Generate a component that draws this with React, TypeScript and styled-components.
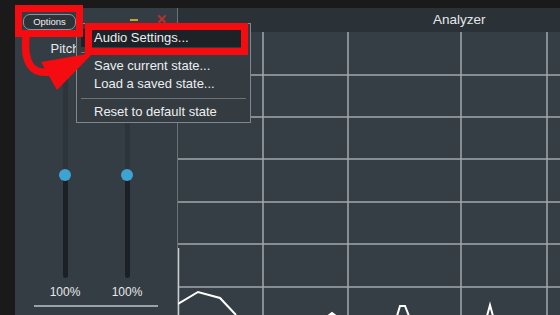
import React from 'react';
import styled, { createGlobalStyle } from 'styled-components';

const GlobalStyle = createGlobalStyle`
  html, body {
    margin: 0;
    padding: 0;
    background: #1a1a1a;
    overflow: hidden;
  }
  * {
    box-sizing: border-box;
  }
`;

const font = `'Liberation Sans', Arial, sans-serif`;

const Screen = styled.div`
  position: relative;
  width: 560px;
  height: 315px;
  padding: 8px 0 0 15px;
  display: flex;
  background: #1a1a1a;
  font-family: ${font};
  overflow: hidden;
`;

const LeftPanel = styled.div`
  width: 163px;
  display: flex;
  flex-direction: column;
  background: #353d44;
  border-right: 1px solid #6b7277;
`;

const TopBar = styled.div`
  height: 28px;
  padding: 6px 0 0 8px;
  display: flex;
  align-items: flex-start;
`;

const OptionsButton = styled.div`
  width: 53px;
  height: 16px;
  border: 1px solid #8b949a;
  border-radius: 7px;
  background: #2c3439;
  color: #eef0f1;
  font-size: 9.5px;
  line-height: 14px;
  text-align: center;
`;

const Minimize = styled.div`
  width: 8px;
  height: 2px;
  margin: 5px 0 0 54px;
  background: #c9a227;
`;

const Close = styled.div`
  position: relative;
  width: 8px;
  height: 8px;
  margin: 1px 0 0 20px;

  &::before,
  &::after {
    content: '';
    position: absolute;
    left: -1px;
    top: 3px;
    width: 10px;
    height: 1.5px;
    background: #b8322e;
    transform: rotate(45deg);
  }
  &::after {
    transform: rotate(-45deg);
  }
`;

const SliderRow = styled.div`
  margin-top: 5px;
  display: flex;
  justify-content: center;
  gap: 22px;
`;

const SliderColumn = styled.div`
  width: 40px;
  display: flex;
  flex-direction: column;
  align-items: center;
`;

const SliderLabel = styled.div`
  height: 16px;
  color: #e6e9eb;
  font-size: 13px;
  line-height: 16px;
  white-space: nowrap;
`;

const Track = styled.div<{ $level: number }>`
  position: relative;
  width: 5px;
  height: 216px;
  margin-top: 5px;
  border-radius: 3px;
  background: linear-gradient(
    to bottom,
    #2d353b 0%,
    #2d353b ${(p) => p.$level * 100}%,
    #1b2024 ${(p) => p.$level * 100}%,
    #1b2024 100%
  );
`;

const Knob = styled.div<{ $level: number }>`
  position: absolute;
  left: 50%;
  top: ${(p) => p.$level * 100}%;
  width: 12px;
  height: 12px;
  margin: -6px 0 0 -6px;
  border-radius: 50%;
  background: #3da3d2;
`;

const ValueLabel = styled.div`
  height: 16px;
  margin-top: 6px;
  color: #e6e9eb;
  font-size: 12px;
  line-height: 16px;
`;

const Underline = styled.div`
  width: 124px;
  height: 2px;
  margin: 5px auto 0;
  background: #9aa2a6;
`;

const RightPanel = styled.div`
  flex: 1;
  display: flex;
  flex-direction: column;
`;

const Header = styled.div`
  height: 24px;
  padding-left: 255px;
  background: #2b3237;
  color: #e4e7e9;
  font-size: 13.5px;
  line-height: 24px;
`;

const Chart = styled.div`
  flex: 1;
  background: #353e45;

  svg {
    display: block;
  }
`;

const Menu = styled.div`
  position: absolute;
  left: 76px;
  top: 23px;
  width: 175px;
  padding: 5px 4px 1px;
  background: #343c42;
  border: 1px solid #80888d;
  font-size: 13px;
  color: #eceef0;
`;

const MenuItem = styled.div<{ $active?: boolean }>`
  height: 18px;
  padding-left: 13px;
  line-height: 18px;
  white-space: nowrap;
  background: ${(p) => (p.$active ? '#1d2226' : 'transparent')};
`;

const MenuSeparator = styled.div`
  height: 1px;
  margin: 5px 0 4px;
  background: #6c7479;
`;

const Highlight = styled.div<{ $left: number; $top: number; $w: number; $h: number }>`
  position: absolute;
  left: ${(p) => p.$left}px;
  top: ${(p) => p.$top}px;
  width: ${(p) => p.$w}px;
  height: ${(p) => p.$h}px;
  border: 7px solid #f40c10;
`;

const ArrowLayer = styled.svg`
  position: absolute;
  left: 0;
  top: 0;
`;

const vLines = [85, 170, 283, 369];
const hLines = [43, 85, 127, 170, 212, 255];

function Slider({ label, level }: { label: string; level: number }) {
  return (
    <SliderColumn>
      <SliderLabel>{label}</SliderLabel>
      <Track $level={level}>
        <Knob $level={level} />
      </Track>
      <ValueLabel>100%</ValueLabel>
    </SliderColumn>
  );
}

export default function App() {
  return (
    <Screen>
      <GlobalStyle />
      <LeftPanel>
        <TopBar>
          <OptionsButton>Options</OptionsButton>
          <Minimize />
          <Close />
        </TopBar>
        <SliderRow>
          <Slider label="Pitch" level={0.523} />
          <Slider label="" level={0.523} />
        </SliderRow>
        <Underline />
      </LeftPanel>

      <RightPanel>
        <Header>Analyzer</Header>
        <Chart>
          <svg width="382" height="283" viewBox="0 0 382 283">
            {vLines.map((x) => (
              <line key={x} x1={x} y1={0} x2={x} y2={283} stroke="#a3a8ab" strokeWidth="1.5" />
            ))}
            {hLines.map((y) => (
              <line key={y} x1={0} y1={y} x2={382} y2={y} stroke="#a3a8ab" strokeWidth="1.5" />
            ))}
            <line x1={0.5} y1={216} x2={0.5} y2={283} stroke="#c9cdcf" strokeWidth="1.5" />
            <polyline
              points="0,272 20,260 42,266 58,283"
              fill="none"
              stroke="#ffffff"
              strokeWidth="2"
            />
            <polyline points="150,284 154,281 158,284" fill="none" stroke="#ffffff" strokeWidth="2" />
            <polyline
              points="219,284 222,274 227,274 231,284"
              fill="none"
              stroke="#ffffff"
              strokeWidth="2"
            />
            <polyline points="309,284 312,273 315,284" fill="none" stroke="#ffffff" strokeWidth="2" />
          </svg>
        </Chart>
      </RightPanel>

      <Menu>
        <MenuItem $active>Audio Settings...</MenuItem>
        <MenuSeparator />
        <MenuItem>Save current state...</MenuItem>
        <MenuItem>Load a saved state...</MenuItem>
        <MenuSeparator />
        <MenuItem>Reset to default state</MenuItem>
      </Menu>

      <Highlight $left={15} $top={5} $w={68} $h={32} />
      <Highlight $left={85} $top={23} $w={163} $h={32} />
      <ArrowLayer width="100" height="95" viewBox="0 0 100 95">
        <path d="M26 36 Q 22 76 50 72" fill="none" stroke="#f40c10" strokeWidth="7.5" />
        <polygon points="41,62 93,53 57,90" fill="#f40c10" />
      </ArrowLayer>
    </Screen>
  );
}
